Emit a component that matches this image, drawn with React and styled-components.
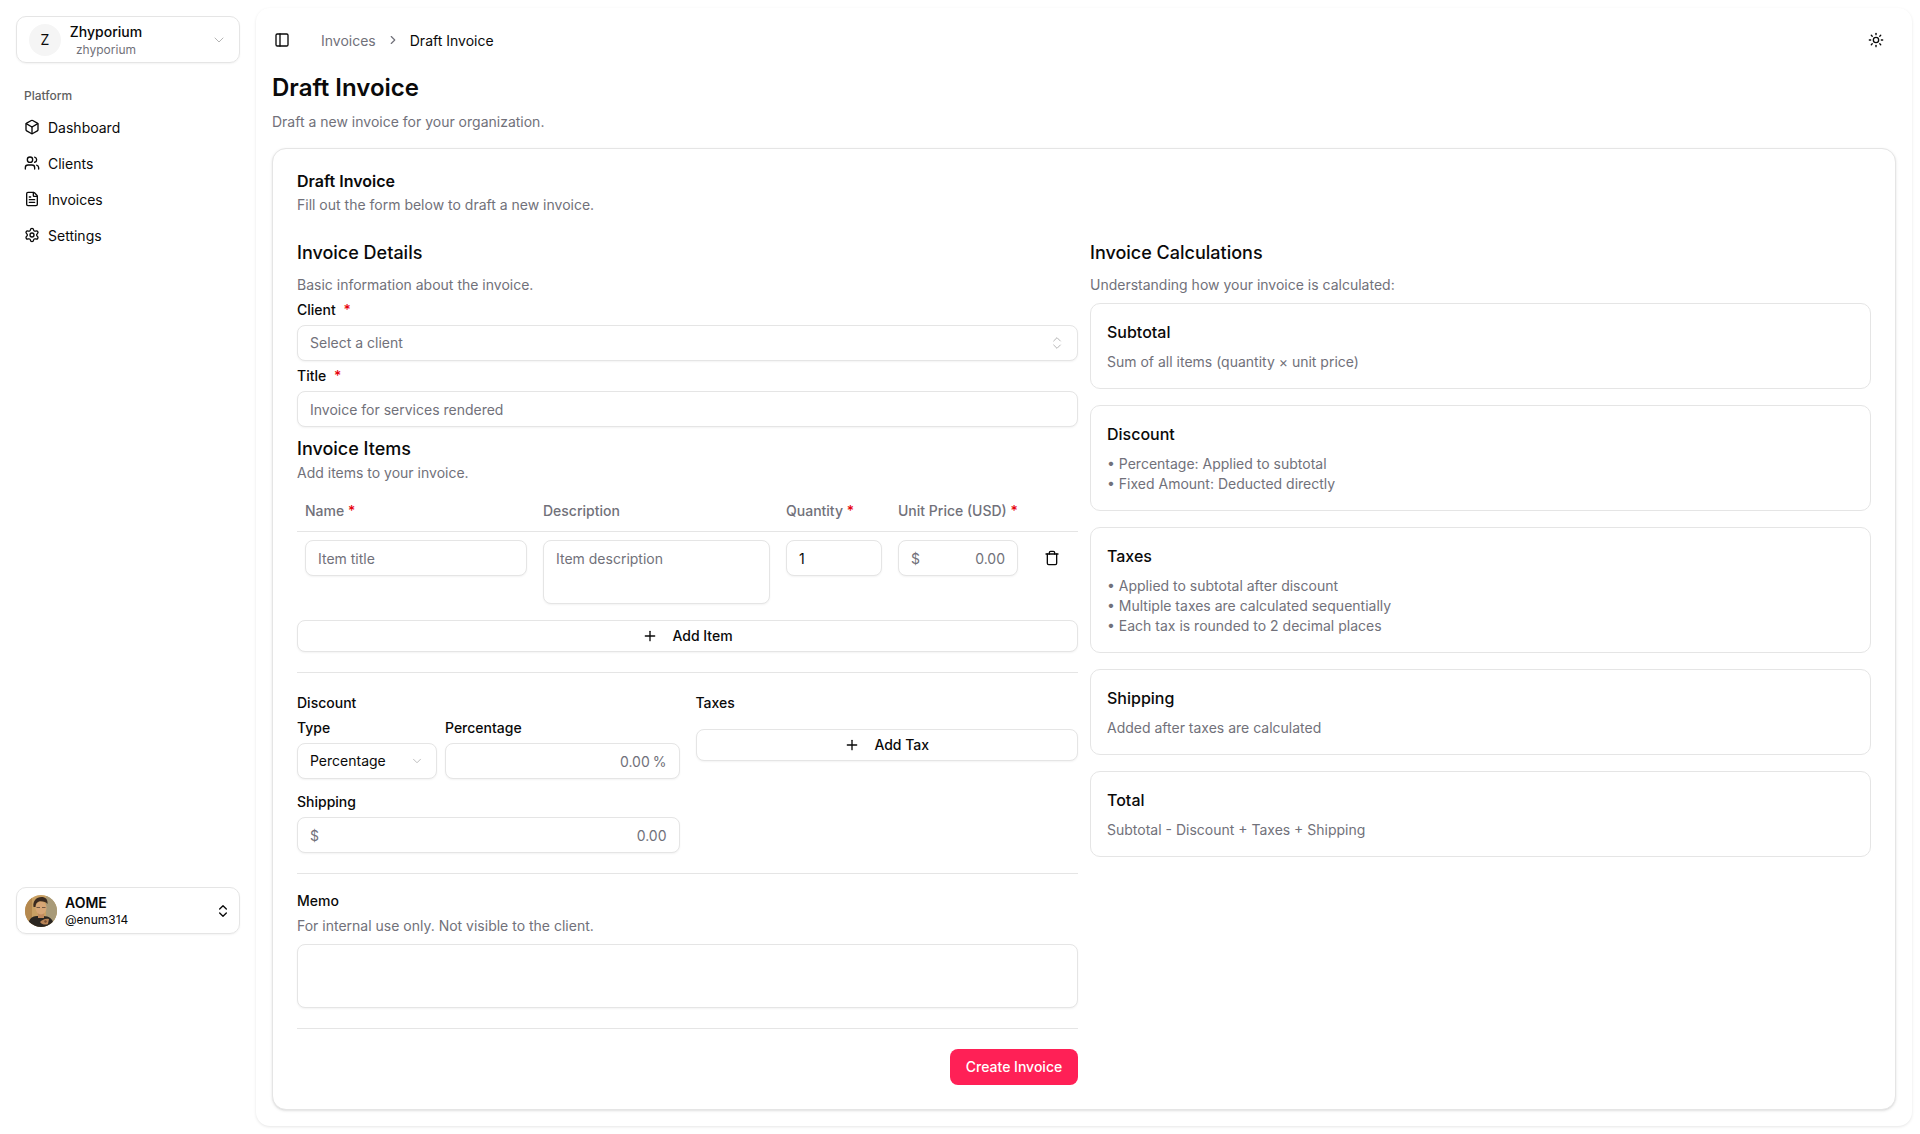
import React from "react";
import styled, { createGlobalStyle, css } from "styled-components";
import {
  Box,
  ChevronDown,
  ChevronRight,
  ChevronsUpDown,
  FileText,
  PanelLeft,
  Plus,
  Settings,
  Sun,
  Trash,
  Users,
} from "lucide-react";

const muted = "#71717a";
const line = "#e5e5e5";

const GlobalStyle = createGlobalStyle`
  html, body {
    margin: 0;
    background: #fff;
    color: #0a0a0a;
    font-family: "Inter", "Noto Sans", sans-serif;
    font-size: 14px;
  }
  * {
    box-sizing: border-box;
  }
`;

const NAV = [
  { label: "Dashboard", icon: Box },
  { label: "Clients", icon: Users },
  { label: "Invoices", icon: FileText },
  { label: "Settings", icon: Settings },
];

const CALCS = [
  { title: "Subtotal", lines: ["Sum of all items (quantity × unit price)"] },
  {
    title: "Discount",
    lines: ["• Percentage: Applied to subtotal", "• Fixed Amount: Deducted directly"],
  },
  {
    title: "Taxes",
    lines: [
      "• Applied to subtotal after discount",
      "• Multiple taxes are calculated sequentially",
      "• Each tax is rounded to 2 decimal places",
    ],
  },
  { title: "Shipping", lines: ["Added after taxes are calculated"] },
  { title: "Total", lines: ["Subtotal - Discount + Taxes + Shipping"] },
];

const Avatar = () => (
  <AvatarSvg viewBox="0 0 32 32">
    <defs>
      <clipPath id="avatar-clip">
        <circle cx="16" cy="16" r="16" />
      </clipPath>
    </defs>
    <g clipPath="url(#avatar-clip)">
      <rect width="32" height="32" fill="#c9a063" />
      <rect x="21" width="11" height="32" fill="#a89a78" />
      <rect width="7" height="32" fill="#b5894f" />
      <path d="M3 32c0-7 3-11 9-11h6c6 0 11 3 11 11z" fill="#2b2621" />
      <rect x="13" y="17" width="6" height="6" fill="#c08a5e" />
      <ellipse cx="16" cy="13" rx="5.500" ry="6.500" fill="#d7a676" />
      <path d="M8.500 12c-1-6 3-10 8-10 4 0 6.500 2.500 6 7-1.500-2-5-3-8.500-2.500-2 .5-3.500 2.500-3.500 5.500z" fill="#3a2a20" />
      <path d="M11.500 12.500H15M17 12.500h3.500" stroke="#5b4636" strokeWidth="0.8" />
      <path d="M15 27c2-2.500 6-4 9-3l-1 5c-2 1-6 1-8-2z" fill="#b98456" />
      <path d="M19 26l2-1 1 2-2 1z" fill="#7a4f34" />
    </g>
  </AvatarSvg>
);

const Req = ({ wide }) => <Star $wide={wide}>*</Star>;

const Calc = ({ title, lines }) => (
  <CalcCard>
    <CalcTitle>{title}</CalcTitle>
    <CalcText>
      {lines.map((l) => (
        <div key={l}>{l}</div>
      ))}
    </CalcText>
  </CalcCard>
);

const App = () => {
  return (
    <Page>
      <GlobalStyle />
      <Sidebar>
        <OrgSwitcher>
          <OrgBadge>Z</OrgBadge>
          <OrgText>
            <OrgName>Zhyporium</OrgName>
            <OrgSlug>zhyporium</OrgSlug>
          </OrgText>
          <ChevronDown size={16} color="#b5b5b5" strokeWidth={1.5} />
        </OrgSwitcher>

        <GroupLabel>Platform</GroupLabel>
        <Nav>
          {NAV.map(({ label, icon: Icon }) => (
            <NavItem key={label}>
              <Icon size={16} strokeWidth={2} />
              {label}
            </NavItem>
          ))}
        </Nav>

        <UserBox>
          <Avatar />
          <UserText>
            <UserName>AOME</UserName>
            <UserHandle>@enum314</UserHandle>
          </UserText>
          <ChevronsUpDown size={16} />
        </UserBox>
      </Sidebar>

      <Inset>
        <TopBar>
          <Crumbs>
            <ToggleIcon>
              <PanelLeft size={16} />
            </ToggleIcon>
            <CrumbLink>Invoices</CrumbLink>
            <ChevronRight size={14} color={muted} />
            <CrumbNow>Draft Invoice</CrumbNow>
          </Crumbs>
          <Sun size={16} />
        </TopBar>

        <Content>
          <PageTitle>Draft Invoice</PageTitle>
          <PageDesc>Draft a new invoice for your organization.</PageDesc>

          <Card>
            <CardTitle>Draft Invoice</CardTitle>
            <CardDesc>Fill out the form below to draft a new invoice.</CardDesc>

            <Columns>
              <Column>
                <SectionTitle>Invoice Details</SectionTitle>
                <Muted $top={8}>Basic information about the invoice.</Muted>

                <Label $top={8}>
                  Client <Req wide />
                </Label>
                <SelectBox $top={8}>
                  <Placeholder>Select a client</Placeholder>
                  <ChevronsUpDown size={16} color="#b5b5b5" strokeWidth={1.5} />
                </SelectBox>

                <Label $top={8}>
                  Title <Req wide />
                </Label>
                <TextInput $top={8} placeholder="Invoice for services rendered" />

                <SectionTitle $top={8}>Invoice Items</SectionTitle>
                <Muted>Add items to your invoice.</Muted>

                <ItemsHead>
                  <HeadCell>
                    Name <Req />
                  </HeadCell>
                  <HeadCell>Description</HeadCell>
                  <HeadCell>
                    Quantity <Req />
                  </HeadCell>
                  <HeadCell>
                    Unit Price (USD) <Req />
                  </HeadCell>
                </ItemsHead>
                <ItemRow>
                  <TextInput placeholder="Item title" />
                  <TextArea placeholder="Item description" />
                  <TextInput defaultValue="1" />
                  <AmountBox>
                    <Affix>$</Affix>
                    <AmountInput placeholder="0.00" />
                  </AmountBox>
                  <TrashButton>
                    <Trash size={16} />
                  </TrashButton>
                </ItemRow>

                <OutlineButton $top={8}>
                  <Plus size={16} />
                  Add Item
                </OutlineButton>

                <Rule />

                <Split>
                  <div>
                    <Label>Discount</Label>
                    <DiscountRow>
                      <Stack>
                        <Label>Type</Label>
                        <SelectBox>
                          <span>Percentage</span>
                          <ChevronDown size={14} color="#b5b5b5" strokeWidth={1.5} />
                        </SelectBox>
                      </Stack>
                      <Stack>
                        <Label>Percentage</Label>
                        <AmountBox>
                          <AmountInput placeholder="0.00" />
                          <Affix $gap>%</Affix>
                        </AmountBox>
                      </Stack>
                    </DiscountRow>
                    <Label $top={16}>Shipping</Label>
                    <AmountBox $top={8}>
                      <Affix>$</Affix>
                      <AmountInput placeholder="0.00" />
                    </AmountBox>
                  </div>
                  <div>
                    <Label>Taxes</Label>
                    <OutlineButton $top={19}>
                      <Plus size={16} />
                      Add Tax
                    </OutlineButton>
                  </div>
                </Split>

                <Rule />

                <Label>Memo</Label>
                <Muted $top={8}>For internal use only. Not visible to the client.</Muted>
                <TextArea $top={8} />

                <Rule />

                <Actions>
                  <SubmitButton>Create Invoice</SubmitButton>
                </Actions>
              </Column>

              <Column>
                <SectionTitle>Invoice Calculations</SectionTitle>
                <Muted $top={8}>Understanding how your invoice is calculated:</Muted>
                <CalcList>
                  {CALCS.map((c) => (
                    <Calc key={c.title} {...c} />
                  ))}
                </CalcList>
              </Column>
            </Columns>
          </Card>
        </Content>
      </Inset>
    </Page>
  );
};

const top = css`
  margin-top: ${({ $top }) => $top || 0}px;
`;

const fieldBase = css`
  display: flex;
  align-items: center;
  width: 100%;
  background: #fff;
  border: 1px solid ${line};
  border-radius: 8px;
  box-shadow: 0 1px 2px rgba(0, 0, 0, 0.05);
  font-family: inherit;
  font-size: 14px;
  color: #0a0a0a;
  outline: none;
  &::placeholder {
    color: ${muted};
    opacity: 1;
  }
`;

const Page = styled.div`
  display: flex;
  min-height: 1134px;
  background: #fff;
`;

const Sidebar = styled.aside`
  display: flex;
  flex-direction: column;
  flex: 0 0 256px;
  height: 950px;
  padding: 16px;
`;

const OrgSwitcher = styled.div`
  display: flex;
  align-items: center;
  height: 47px;
  padding: 0 12px;
  border: 1px solid ${line};
  border-radius: 10px;
  box-shadow: 0 1px 2px rgba(0, 0, 0, 0.05);
`;

const OrgBadge = styled.div`
  display: flex;
  align-items: center;
  justify-content: center;
  flex: none;
  width: 32px;
  height: 32px;
  border-radius: 50%;
  background: #f5f5f5;
`;

const OrgText = styled.div`
  display: flex;
  flex-direction: column;
  align-items: center;
  flex: 1;
  padding: 2px 68px 0 0;
  margin-left: 8px;
`;

const OrgName = styled.div`
  font-weight: 500;
  line-height: 18px;
`;

const OrgSlug = styled.div`
  margin-top: 1px;
  font-size: 12px;
  line-height: 16px;
  color: ${muted};
`;

const GroupLabel = styled.div`
  margin: 25px 0 5px 8px;
  font-size: 12px;
  line-height: 16px;
  font-weight: 500;
  color: #5f5f5f;
`;

const Nav = styled.nav`
  display: flex;
  flex-direction: column;
`;

const NavItem = styled.a`
  display: flex;
  align-items: center;
  gap: 8px;
  height: 36px;
  padding-left: 8px;
  color: #0a0a0a;
`;

const UserBox = styled.div`
  display: flex;
  align-items: center;
  gap: 8px;
  height: 47px;
  margin-top: auto;
  padding: 0 8px;
  border: 1px solid ${line};
  border-radius: 10px;
  box-shadow: 0 1px 2px rgba(0, 0, 0, 0.05);
`;

const AvatarSvg = styled.svg`
  flex: none;
  width: 32px;
  height: 32px;
`;

const UserText = styled.div`
  flex: 1;
`;

const UserName = styled.div`
  font-weight: 600;
  line-height: 17px;
`;

const UserHandle = styled.div`
  margin-top: 1px;
  font-size: 12px;
  line-height: 16px;
`;

const Inset = styled.main`
  flex: 1;
  min-width: 0;
  margin: 8px 8px 8px 0;
  border-radius: 14px;
  background: #fff;
  box-shadow: 0 1px 3px rgba(0, 0, 0, 0.1);
`;

const TopBar = styled.header`
  display: flex;
  align-items: center;
  justify-content: space-between;
  height: 64px;
  padding: 0 28px 0 18px;
`;

const Crumbs = styled.div`
  display: flex;
  align-items: center;
  gap: 10px;
`;

const ToggleIcon = styled.span`
  display: flex;
  margin-right: 21px;
`;

const CrumbLink = styled.span`
  color: ${muted};
`;

const CrumbNow = styled.span`
  color: #0a0a0a;
`;

const Content = styled.div`
  padding: 0 16px 16px;
`;

const PageTitle = styled.h1`
  margin: 0;
  font-size: 24px;
  line-height: 32px;
  font-weight: 600;
`;

const PageDesc = styled.p`
  margin: 8px 0 16px;
  line-height: 20px;
  color: ${muted};
`;

const Card = styled.section`
  padding: 24px;
  border: 1px solid ${line};
  border-radius: 14px;
  background: #fff;
  box-shadow: 0 1px 3px rgba(0, 0, 0, 0.1), 0 1px 2px -1px rgba(0, 0, 0, 0.1);
`;

const CardTitle = styled.div`
  font-size: 16px;
  line-height: 16px;
  font-weight: 600;
`;

const CardDesc = styled.div`
  margin-top: 6px;
  line-height: 20px;
  color: ${muted};
`;

const Columns = styled.div`
  display: grid;
  grid-template-columns: minmax(0, 1fr) minmax(0, 1fr);
  gap: 12px;
  margin-top: 24px;
`;

const Column = styled.div`
  min-width: 0;
`;

const SectionTitle = styled.h3`
  ${top}
  margin-bottom: 0;
  font-size: 18px;
  line-height: 28px;
  font-weight: 500;
`;

const Muted = styled.div`
  ${top}
  line-height: 20px;
  color: ${muted};
`;

const Label = styled.div`
  ${top}
  line-height: 14px;
  font-weight: 500;
`;

const Star = styled.span`
  margin-left: ${({ $wide }) => ($wide ? 4 : 0)}px;
  color: #e7000b;
`;

const Placeholder = styled.span`
  color: ${muted};
`;

const SelectBox = styled.div`
  ${fieldBase}
  ${top}
  justify-content: space-between;
  height: 36px;
  padding: 0 12px 1px;
`;

const TextInput = styled.input`
  ${fieldBase}
  ${top}
  height: 36px;
  padding: 0 12px;
`;

const TextArea = styled.textarea`
  ${fieldBase}
  ${top}
  display: block;
  height: 64px;
  padding: 8px 12px;
  line-height: 20px;
  resize: none;
`;

const AmountBox = styled.div`
  ${fieldBase}
  ${top}
  height: 36px;
  padding: 0 12px;
`;

const AmountInput = styled.input`
  flex: 1;
  min-width: 0;
  width: 0;
  padding: 0;
  border: none;
  outline: none;
  background: none;
  font-family: inherit;
  font-size: 14px;
  text-align: right;
  &::placeholder {
    color: ${muted};
    opacity: 1;
  }
`;

const Affix = styled.span`
  color: ${muted};
  margin-left: ${({ $gap }) => ($gap ? 3 : 0)}px;
`;

const itemColumns = css`
  display: grid;
  grid-template-columns: 238px 243px 112px 136px 1fr;
`;

const ItemsHead = styled.div`
  ${itemColumns}
  align-items: center;
  height: 41px;
  margin-top: 8px;
  padding-bottom: 2px;
  border-bottom: 1px solid ${line};
`;

const HeadCell = styled.div`
  padding: 0 8px;
  font-weight: 500;
  white-space: nowrap;
  color: ${muted};
`;

const ItemRow = styled.div`
  ${itemColumns}
  align-items: start;
  padding: 8px 0;
  & > * {
    width: auto;
    min-width: 0;
    margin: 0 8px;
  }
`;

const TrashButton = styled.div`
  display: flex;
  justify-content: center;
  padding: 10px 0;
`;

const OutlineButton = styled.div`
  ${top}
  display: flex;
  align-items: center;
  justify-content: center;
  gap: 14px;
  height: 32px;
  padding-bottom: 1px;
  border: 1px solid ${line};
  border-radius: 8px;
  background: #fff;
  box-shadow: 0 1px 2px rgba(0, 0, 0, 0.05);
  font-weight: 500;
`;

const Rule = styled.hr`
  height: 1px;
  margin: 20px 0;
  border: none;
  background: ${line};
`;

const Split = styled.div`
  display: grid;
  grid-template-columns: minmax(0, 1fr) minmax(0, 1fr);
  gap: 16px;
  padding-top: 3px;
`;

const DiscountRow = styled.div`
  display: grid;
  grid-template-columns: 140px minmax(0, 1fr);
  gap: 8px;
  margin-top: 11px;
`;

const Stack = styled.div`
  display: flex;
  flex-direction: column;
  gap: 8px;
`;

const Actions = styled.div`
  display: flex;
  justify-content: flex-end;
`;

const SubmitButton = styled.button`
  height: 36px;
  width: 128px;
  padding: 0 0 2px;
  border: none;
  border-radius: 8px;
  background: #ff2056;
  color: #fff;
  font-family: inherit;
  font-size: 14px;
  font-weight: 500;
`;

const CalcList = styled.div`
  display: flex;
  flex-direction: column;
  gap: 16px;
  margin-top: 8px;
`;

const CalcCard = styled.div`
  padding: 16px;
  border: 1px solid ${line};
  border-radius: 10px;
`;

const CalcTitle = styled.div`
  font-size: 16px;
  line-height: 24px;
  font-weight: 500;
`;

const CalcText = styled.div`
  margin-top: 8px;
  line-height: 20px;
  color: ${muted};
`;

export default App;
